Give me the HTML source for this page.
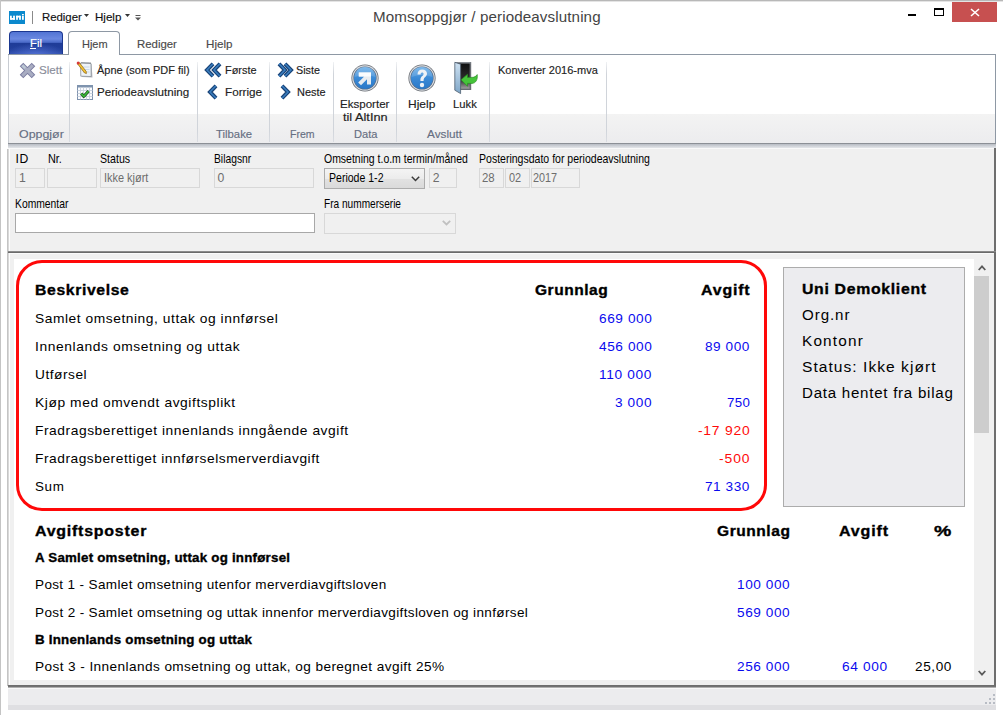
<!DOCTYPE html>
<html><head><meta charset="utf-8">
<style>
*{margin:0;padding:0;box-sizing:border-box}
html,body{width:1003px;height:715px;overflow:hidden;background:#fff;font-family:"Liberation Sans",sans-serif}
.a{position:absolute}
.t{position:absolute;white-space:pre;line-height:1}
svg{position:absolute;overflow:visible}
</style></head><body>
<div class="a" style="left:0px;top:0px;width:1003px;height:715px;background:#fff"></div>
<div class="a" style="left:0px;top:0px;width:1003px;height:1px;background:#b8b8b8"></div>
<div class="a" style="left:0px;top:1px;width:1003px;height:1px;background:#e4e4e4"></div>
<div class="a" style="left:0px;top:0px;width:1px;height:715px;background:#c4c4c4"></div>
<svg style="left:9px;top:11px" width="16" height="13" viewBox="0 0 16 13"><rect width="16" height="13" fill="#0b89cd"/><g fill="#fff"><rect x="1" y="4.7" width="1.8" height="4.1"/><rect x="4.1" y="4.7" width="1.8" height="4.1"/><rect x="1.6" y="7" width="4.3" height="1.8" rx="0.5"/><rect x="7.1" y="4.7" width="1.8" height="4.1"/><rect x="10.1" y="4.7" width="1.8" height="4.1"/><rect x="7.1" y="4.7" width="4.3" height="1.8" rx="0.5"/><rect x="13" y="4.7" width="1.8" height="4.1"/><rect x="13" y="3" width="1.8" height="1.1"/></g></svg>
<div class="a" style="left:32px;top:11px;width:1px;height:13px;background:#8a8a8a"></div>
<div class="t" style="left:41.50px;top:11.87px;font-size:11.5px;letter-spacing:0.000px;color:#111;-webkit-text-stroke:0.15px #111;transform:scaleX(0.9881);transform-origin:0 0;">Rediger</div>
<svg style="left:84px;top:14px" width="6" height="4"><path d="M0 0h5l-2.5 3z" fill="#333"/></svg>
<div class="t" style="left:95.40px;top:11.87px;font-size:11.5px;letter-spacing:0.000px;color:#111;-webkit-text-stroke:0.15px #111;transform:scaleX(1.0069);transform-origin:0 0;">Hjelp</div>
<svg style="left:125px;top:14px" width="6" height="4"><path d="M0 0h5l-2.5 3z" fill="#333"/></svg>
<svg style="left:135px;top:15px" width="7" height="6"><path d="M0.5 0.5h5" stroke="#555" stroke-width="1"/><path d="M0 2.5h6l-3 3z" fill="#555"/></svg>
<div class="t" style="left:373.00px;top:9.30px;font-size:15px;letter-spacing:0.115px;color:#444;transform:scaleX(1.0105);transform-origin:0 0;">Momsoppgjør / periodeavslutning</div>
<div class="a" style="left:908px;top:14px;width:8px;height:2px;background:#000"></div>
<div class="a" style="left:934px;top:8px;width:10px;height:8px;border:1px solid #000;border-top-width:2px"></div>
<div class="a" style="left:952px;top:2px;width:45px;height:20px;background:#c75050"></div>
<svg style="left:970px;top:8px" width="10" height="9"><path d="M1 1L9 8M9 1L1 8" stroke="#fff" stroke-width="1.6"/></svg>
<div class="a" style="left:9px;top:31px;width:54px;height:24px;background:radial-gradient(ellipse 60% 50% at 50% 100%,rgba(90,120,220,0.8),rgba(90,120,220,0) 100%),linear-gradient(#5274d4 0,#6a88e0 30%,#4a6ac8 45%,#1f3c98 50%,#22409c 80%,#3050b0 100%);border:1px solid #1b3790;border-bottom:none;border-radius:4px 4px 0 0"></div>
<div class="t" style="left:30.40px;top:38.17px;font-size:11.5px;letter-spacing:0.000px;color:#fff;-webkit-text-stroke:0.15px #fff;transform:scaleX(0.9884);transform-origin:0 0;">Fil</div>
<div class="a" style="left:30px;top:48px;width:6px;height:1px;background:#fff"></div>
<div class="a" style="left:8px;top:54px;width:988px;height:1px;background:#8e98a4"></div>
<div class="a" style="left:68px;top:31px;width:52px;height:25px;background:#fff;border:1px solid #8e98a4;border-bottom:none;border-radius:4px 4px 0 0"></div>
<div class="t" style="left:81.50px;top:38.97px;font-size:11.5px;letter-spacing:0.000px;color:#4a4a4a;-webkit-text-stroke:0.15px #4a4a4a;transform:scaleX(0.9537);transform-origin:0 0;">Hjem</div>
<div class="t" style="left:136.60px;top:38.97px;font-size:11.5px;letter-spacing:0.000px;color:#4a4a4a;-webkit-text-stroke:0.15px #4a4a4a;transform:scaleX(0.9905);transform-origin:0 0;">Rediger</div>
<div class="t" style="left:205.50px;top:38.97px;font-size:11.5px;letter-spacing:0.000px;color:#4a4a4a;-webkit-text-stroke:0.15px #4a4a4a;transform:scaleX(1.0107);transform-origin:0 0;">Hjelp</div>
<div class="a" style="left:8px;top:55px;width:988px;height:59px;background:#fff"></div>
<div class="a" style="left:8px;top:114px;width:988px;height:29.5px;background:linear-gradient(#f3f3f3,#ececee)"></div>
<div class="a" style="left:69px;top:100px;width:1px;height:1px;"></div>
<div class="a" style="left:69px;top:62px;width:1px;height:80px;background:linear-gradient(rgba(205,210,218,0.3),#d0d4da 15%,#d0d4da 85%,rgba(205,210,218,0.6))"></div>
<div class="a" style="left:197px;top:62px;width:1px;height:80px;background:linear-gradient(rgba(205,210,218,0.3),#d0d4da 15%,#d0d4da 85%,rgba(205,210,218,0.6))"></div>
<div class="a" style="left:269px;top:62px;width:1px;height:80px;background:linear-gradient(rgba(205,210,218,0.3),#d0d4da 15%,#d0d4da 85%,rgba(205,210,218,0.6))"></div>
<div class="a" style="left:333px;top:62px;width:1px;height:80px;background:linear-gradient(rgba(205,210,218,0.3),#d0d4da 15%,#d0d4da 85%,rgba(205,210,218,0.6))"></div>
<div class="a" style="left:396px;top:62px;width:1px;height:80px;background:linear-gradient(rgba(205,210,218,0.3),#d0d4da 15%,#d0d4da 85%,rgba(205,210,218,0.6))"></div>
<div class="a" style="left:489px;top:62px;width:1px;height:80px;background:linear-gradient(rgba(205,210,218,0.3),#d0d4da 15%,#d0d4da 85%,rgba(205,210,218,0.6))"></div>
<div class="a" style="left:606px;top:62px;width:1px;height:80px;background:linear-gradient(rgba(205,210,218,0.3),#d0d4da 15%,#d0d4da 85%,rgba(205,210,218,0.6))"></div>
<div class="a" style="left:8px;top:55px;width:1px;height:88px;background:#c8ccd2"></div>
<div class="a" style="left:995px;top:54px;width:1px;height:89px;background:#8e98a4"></div>
<div class="a" style="left:8px;top:143px;width:988px;height:1px;background:#8c9096"></div>
<div class="a" style="left:8px;top:144px;width:988px;height:4px;background:linear-gradient(#b8bcc4,#e4e6ea)"></div>
<div class="a" style="left:8px;top:148px;width:988px;height:1px;background:#fafafa"></div>
<svg style="left:18.5px;top:61.5px" width="17" height="17" viewBox="0 0 17 17"><path d="M2.5 2.5L14.5 14.5M14.5 2.5L2.5 14.5" stroke="#7c7ea2" stroke-width="5"/><path d="M3.2 3.2L13.8 13.8M13.8 3.2L3.2 13.8" stroke="#a9adc2" stroke-width="3.1"/><path d="M3.3 3.3L6.2 6.2" stroke="#bcc8d4" stroke-width="2.4"/></svg>
<div class="t" style="left:38.50px;top:65.07px;font-size:11.5px;letter-spacing:0.000px;color:#8a8e9a;-webkit-text-stroke:0.15px #8a8e9a;transform:scaleX(1.0124);transform-origin:0 0;">Slett</div>
<div class="t" style="left:19.00px;top:128.77px;font-size:11.5px;letter-spacing:0.000px;color:#666e82;-webkit-text-stroke:0.15px #666e82;transform:scaleX(1.0783);transform-origin:0 0;">Oppgjør</div>
<svg style="left:76px;top:61px" width="18" height="18" viewBox="0 0 18 18"><path d="M5.5 2.5L15.5 3L16.5 16.5L6 16z" fill="#b0b4bc"/><path d="M4.5 2L15 2.5L15.2 15.5L4.8 15.2z" fill="#eef3f8" stroke="#8a9098" stroke-width="0.8"/><path d="M6 2.2v-1.2M8 2.3v-1.2M10 2.4v-1.2M12 2.4v-1.2M14 2.5v-1.2" stroke="#505860" stroke-width="0.9"/><path d="M7 6h6.5M7 8.5h6.5M7 11h6.5" stroke="#b8cce0" stroke-width="0.7"/><path d="M1.5 2.8L3.2 1.4L10.2 10.4L10.4 12.6L8.4 11.8z" fill="#f2c230" stroke="#8a6010" stroke-width="0.7"/><circle cx="2.2" cy="2" r="1.5" fill="#d83838"/></svg>
<div class="t" style="left:96.60px;top:65.07px;font-size:11.5px;letter-spacing:0.000px;color:#222;-webkit-text-stroke:0.15px #222;transform:scaleX(0.9533);transform-origin:0 0;">Åpne (som PDF fil)</div>
<svg style="left:77px;top:85px" width="16" height="15" viewBox="0 0 16 15"><rect x="0.5" y="0.5" width="15" height="14" fill="#fbfcfe" stroke="#7f93ae"/><rect x="0.5" y="0.5" width="15" height="2" fill="#7f93ae"/><path d="M0.5 5.5h15M0.5 8.5h15M0.5 11.5h15M3.5 2.5v12M6.5 2.5v12M9.5 2.5v12M12.5 2.5v12" stroke="#c6d0de" stroke-width="0.9"/><path d="M4.3 8.6L6.8 11.4L11.6 6" stroke="#1e4a1e" stroke-width="3" fill="none" stroke-linejoin="round"/><path d="M4.3 8.6L6.8 11.4L11.6 6" stroke="#38b838" stroke-width="1.7" fill="none" stroke-linejoin="round"/></svg>
<div class="t" style="left:96.60px;top:86.77px;font-size:11.5px;letter-spacing:0.000px;color:#222;-webkit-text-stroke:0.15px #222;transform:scaleX(1.0085);transform-origin:0 0;">Periodeavslutning</div>
<svg style="left:204px;top:62px" width="18" height="16" viewBox="0 0 18 16"><polyline points="16,1.8 10,8 16,14.2" stroke="#1a4478" stroke-width="4" fill="none" stroke-linejoin="miter"/><polyline points="9,1.8 3,8 9,14.2" stroke="#1a4478" stroke-width="4" fill="none" stroke-linejoin="miter"/><polyline points="16,1.8 10,8 16,14.2" stroke="#3a7fc0" stroke-width="1.5" fill="none" stroke-linejoin="miter"/><polyline points="9,1.8 3,8 9,14.2" stroke="#3a7fc0" stroke-width="1.5" fill="none" stroke-linejoin="miter"/></svg>
<div class="t" style="left:224.60px;top:65.07px;font-size:11.5px;letter-spacing:0.000px;color:#222;-webkit-text-stroke:0.15px #222;transform:scaleX(0.9508);transform-origin:0 0;">Første</div>
<svg style="left:207px;top:84px" width="12" height="16" viewBox="0 0 12 16"><polyline points="9,1.8 3,8 9,14.2" stroke="#1a4478" stroke-width="4" fill="none" stroke-linejoin="miter"/><polyline points="9,1.8 3,8 9,14.2" stroke="#3a7fc0" stroke-width="1.5" fill="none" stroke-linejoin="miter"/></svg>
<div class="t" style="left:224.60px;top:86.77px;font-size:11.5px;letter-spacing:0.000px;color:#222;-webkit-text-stroke:0.15px #222;transform:scaleX(1.0154);transform-origin:0 0;">Forrige</div>
<div class="t" style="left:216.40px;top:128.77px;font-size:11.5px;letter-spacing:0.000px;color:#666e82;-webkit-text-stroke:0.15px #666e82;transform:scaleX(0.9848);transform-origin:0 0;">Tilbake</div>
<svg style="left:276px;top:62px" width="18" height="16" viewBox="0 0 18 16"><polyline points="3,1.8 9,8 3,14.2" stroke="#1a4478" stroke-width="4" fill="none" stroke-linejoin="miter"/><polyline points="9,1.8 15,8 9,14.2" stroke="#1a4478" stroke-width="4" fill="none" stroke-linejoin="miter"/><polyline points="3,1.8 9,8 3,14.2" stroke="#3a7fc0" stroke-width="1.5" fill="none" stroke-linejoin="miter"/><polyline points="9,1.8 15,8 9,14.2" stroke="#3a7fc0" stroke-width="1.5" fill="none" stroke-linejoin="miter"/></svg>
<div class="t" style="left:296.20px;top:65.07px;font-size:11.5px;letter-spacing:0.000px;color:#222;-webkit-text-stroke:0.15px #222;transform:scaleX(0.9344);transform-origin:0 0;">Siste</div>
<svg style="left:279px;top:84px" width="12" height="16" viewBox="0 0 12 16"><polyline points="3,1.8 9,8 3,14.2" stroke="#1a4478" stroke-width="4" fill="none" stroke-linejoin="miter"/><polyline points="3,1.8 9,8 3,14.2" stroke="#3a7fc0" stroke-width="1.5" fill="none" stroke-linejoin="miter"/></svg>
<div class="t" style="left:296.60px;top:86.77px;font-size:11.5px;letter-spacing:0.000px;color:#222;-webkit-text-stroke:0.15px #222;transform:scaleX(0.9518);transform-origin:0 0;">Neste</div>
<div class="t" style="left:289.70px;top:128.77px;font-size:11.5px;letter-spacing:0.000px;color:#666e82;-webkit-text-stroke:0.15px #666e82;transform:scaleX(0.9164);transform-origin:0 0;">Frem</div>
<svg style="left:351px;top:64px" width="28" height="28" viewBox="0 0 28 28"><defs><linearGradient id="g1" x1="0" y1="0" x2="0" y2="1"><stop offset="0" stop-color="#68aee8"/><stop offset="0.5" stop-color="#3b8ad6"/><stop offset="1" stop-color="#2a78c8"/></linearGradient></defs><circle cx="14" cy="14" r="13.6" fill="#6a6e74"/><circle cx="14" cy="14" r="12.8" fill="#d8dce2"/><circle cx="14" cy="14" r="11.6" fill="#5a6a80"/><circle cx="14" cy="14" r="11" fill="url(#g1)"/><path d="M3.5 13 A10.5 10.5 0 0 1 24.5 13 Q14 9 3.5 13z" fill="#ffffff" opacity="0.15"/><path d="M7.8 8.5H20V20.5H16V15.3L10 21.3L7.2 18.5L13.2 12.5H7.8z" fill="#e8ecf0"/><path d="M7.8 8.5H20V12.5H7.8z" fill="#fafcfe"/></svg>
<div class="t" style="left:340.40px;top:98.87px;font-size:11.5px;letter-spacing:0.000px;color:#222;-webkit-text-stroke:0.15px #222;transform:scaleX(1.0037);transform-origin:0 0;">Eksporter</div>
<div class="t" style="left:342.80px;top:111.67px;font-size:11.5px;letter-spacing:0.000px;color:#222;-webkit-text-stroke:0.15px #222;transform:scaleX(1.1072);transform-origin:0 0;">til AltInn</div>
<div class="t" style="left:353.60px;top:128.77px;font-size:11.5px;letter-spacing:0.000px;color:#666e82;-webkit-text-stroke:0.15px #666e82;transform:scaleX(0.9672);transform-origin:0 0;">Data</div>
<svg style="left:408px;top:63.5px" width="28" height="28" viewBox="0 0 28 28"><defs><linearGradient id="g2" x1="0" y1="0" x2="0" y2="1"><stop offset="0" stop-color="#68aee8"/><stop offset="0.5" stop-color="#3b8ad6"/><stop offset="1" stop-color="#2a78c8"/></linearGradient></defs><circle cx="14" cy="14" r="13.6" fill="#6a6e74"/><circle cx="14" cy="14" r="12.8" fill="#d8dce2"/><circle cx="14" cy="14" r="11.6" fill="#5a6a80"/><circle cx="14" cy="14" r="11" fill="url(#g2)"/><path d="M3.5 13 A10.5 10.5 0 0 1 24.5 13 Q14 9 3.5 13z" fill="#ffffff" opacity="0.15"/><path d="M9.5 10.5C9.5 7.3 11.5 5.6 14.2 5.6C17.3 5.6 19 7.5 19 9.8C19 12.8 15.6 13.2 15.6 16.2V17H12.4V15.8C12.4 12.2 15.6 11.8 15.6 10C15.6 9 15 8.5 14.1 8.5C13.1 8.5 12.6 9.2 12.6 10.5z" fill="#eef2f6"/><circle cx="14" cy="21" r="2.2" fill="#eef2f6"/></svg>
<div class="t" style="left:408.00px;top:98.87px;font-size:11.5px;letter-spacing:0.000px;color:#222;-webkit-text-stroke:0.15px #222;transform:scaleX(1.0412);transform-origin:0 0;">Hjelp</div>
<svg style="left:448px;top:58px" width="34" height="38" viewBox="0 0 34 38"><defs><linearGradient id="dg1" x1="0" y1="0" x2="0" y2="1"><stop offset="0" stop-color="#101010"/><stop offset="0.65" stop-color="#2e2e2e"/><stop offset="1" stop-color="#a0a0a0"/></linearGradient><linearGradient id="dg2" x1="0" y1="0" x2="0" y2="1"><stop offset="0" stop-color="#cfe2f2"/><stop offset="1" stop-color="#7ea6c8"/></linearGradient></defs><rect x="7" y="4" width="16.2" height="28" fill="#686c72"/><rect x="7.6" y="4.4" width="15" height="1" fill="#9aa0a6"/><rect x="8.6" y="5.6" width="13" height="25" fill="url(#dg1)"/><path d="M6.8 4.3L12.6 6.2V35.6L6.8 32.2z" fill="url(#dg2)" stroke="#4c5c6c" stroke-width="0.8"/><path d="M13 21.8L19.5 16.3V19.4H24C26.4 19.4 28 18.4 29.2 16.6C29.8 21.4 28 25.2 24 25.4H19.5V28.3z" fill="#46c43a" stroke="#2a8c22" stroke-width="0.7"/></svg>
<div class="t" style="left:452.50px;top:98.87px;font-size:11.5px;letter-spacing:0.000px;color:#222;-webkit-text-stroke:0.15px #222;transform:scaleX(0.9795);transform-origin:0 0;">Lukk</div>
<div class="t" style="left:426.50px;top:128.77px;font-size:11.5px;letter-spacing:0.000px;color:#666e82;-webkit-text-stroke:0.15px #666e82;transform:scaleX(1.0230);transform-origin:0 0;">Avslutt</div>
<div class="t" style="left:498.40px;top:64.97px;font-size:11.5px;letter-spacing:0.000px;color:#222;-webkit-text-stroke:0.15px #222;transform:scaleX(0.9577);transform-origin:0 0;">Konverter 2016-mva</div>
<div class="a" style="left:7px;top:149px;width:989px;height:103px;background:#f0f0f0"></div>
<div class="a" style="left:7px;top:149px;width:1px;height:537px;background:#c4c4c4"></div>
<div class="a" style="left:8px;top:149px;width:1px;height:537px;background:#d8d8d8"></div>
<div class="a" style="left:9px;top:149px;width:1px;height:537px;background:#fdfdfd"></div>
<div class="a" style="left:994px;top:148px;width:2px;height:104px;background:#6e6e6e"></div>
<div class="t" style="left:15.60px;top:152.57px;font-size:12.2px;letter-spacing:0.000px;color:#000;letter-spacing:0.4px">ID</div>
<div class="t" style="left:47.70px;top:152.57px;font-size:12.2px;letter-spacing:0.000px;color:#000;transform:scaleX(0.8923);transform-origin:0 0;">Nr.</div>
<div class="t" style="left:100.30px;top:152.57px;font-size:12.2px;letter-spacing:0.000px;color:#000;transform:scaleX(0.8709);transform-origin:0 0;">Status</div>
<div class="t" style="left:214.40px;top:152.57px;font-size:12.2px;letter-spacing:0.000px;color:#000;transform:scaleX(0.8449);transform-origin:0 0;">Bilagsnr</div>
<div class="t" style="left:324.00px;top:152.57px;font-size:12.2px;letter-spacing:0.000px;color:#000;transform:scaleX(0.8595);transform-origin:0 0;">Omsetning t.o.m termin/måned</div>
<div class="t" style="left:479.40px;top:152.57px;font-size:12.2px;letter-spacing:0.000px;color:#000;transform:scaleX(0.8638);transform-origin:0 0;">Posteringsdato for periodeavslutning</div>
<div class="a" style="left:15px;top:168px;width:30px;height:20px;background:#f0f0f0;border:1px solid #d8d8d8"></div>
<div class="a" style="left:47px;top:168px;width:50px;height:20px;background:#f0f0f0;border:1px solid #d8d8d8"></div>
<div class="a" style="left:100px;top:168px;width:100px;height:20px;background:#f0f0f0;border:1px solid #d8d8d8"></div>
<div class="a" style="left:214px;top:168px;width:100px;height:20px;background:#f0f0f0;border:1px solid #d8d8d8"></div>
<div class="a" style="left:429px;top:168px;width:28px;height:20px;background:#f0f0f0;border:1px solid #d8d8d8"></div>
<div class="a" style="left:479px;top:168px;width:25px;height:20px;background:#f0f0f0;border:1px solid #d8d8d8"></div>
<div class="a" style="left:505px;top:168px;width:25px;height:20px;background:#f0f0f0;border:1px solid #d8d8d8"></div>
<div class="a" style="left:531px;top:168px;width:49px;height:20px;background:#f0f0f0;border:1px solid #d8d8d8"></div>
<div class="t" style="left:19.00px;top:171.67px;font-size:12.2px;letter-spacing:0.000px;color:#6d6d6d;">1</div>
<div class="t" style="left:103.70px;top:171.67px;font-size:12.2px;letter-spacing:0.000px;color:#6d6d6d;transform:scaleX(0.8981);transform-origin:0 0;">Ikke kjørt</div>
<div class="t" style="left:217.60px;top:171.67px;font-size:12.2px;letter-spacing:0.000px;color:#6d6d6d;">0</div>
<div class="t" style="left:432.70px;top:171.67px;font-size:12.2px;letter-spacing:0.000px;color:#6d6d6d;">2</div>
<div class="t" style="left:482.40px;top:171.67px;font-size:12.2px;letter-spacing:0.000px;color:#6d6d6d;transform:scaleX(0.9364);transform-origin:0 0;">28</div>
<div class="t" style="left:508.50px;top:171.67px;font-size:12.2px;letter-spacing:0.000px;color:#6d6d6d;transform:scaleX(0.8995);transform-origin:0 0;">02</div>
<div class="t" style="left:533.40px;top:171.67px;font-size:12.2px;letter-spacing:0.000px;color:#6d6d6d;transform:scaleX(0.8885);transform-origin:0 0;">2017</div>
<div class="a" style="left:324px;top:168px;width:101px;height:21px;background:linear-gradient(#f4f4f4,#ececec 50%,#e2e2e2 51%,#dadada);border:1px solid #acacac"></div>
<div class="t" style="left:328.60px;top:172.47px;font-size:12.2px;letter-spacing:0.000px;color:#000;transform:scaleX(0.8649);transform-origin:0 0;">Periode 1-2</div>
<svg style="left:411px;top:176px" width="9" height="6" viewBox="0 0 9 6"><path d="M0.8 0.8L4.5 4.5L8.2 0.8" stroke="#3a3a3a" stroke-width="1.5" fill="none"/></svg>
<div class="t" style="left:15.40px;top:197.67px;font-size:12.2px;letter-spacing:0.000px;color:#000;transform:scaleX(0.8476);transform-origin:0 0;">Kommentar</div>
<div class="t" style="left:324.10px;top:197.67px;font-size:12.2px;letter-spacing:0.000px;color:#000;transform:scaleX(0.8299);transform-origin:0 0;">Fra nummerserie</div>
<div class="a" style="left:15px;top:213px;width:300px;height:20px;background:#fff;border:1px solid #a8a8a8"></div>
<div class="a" style="left:324px;top:213px;width:132px;height:21px;background:#f0f0f0;border:1px solid #d8d8d8"></div>
<svg style="left:442px;top:220px" width="9" height="6" viewBox="0 0 9 6"><path d="M0.8 0.8L4.5 4.5L8.2 0.8" stroke="#c0c0c0" stroke-width="1.8" fill="none"/></svg>
<div class="a" style="left:10px;top:254px;width:984px;height:431px;background:#f0f0f0"></div>
<div class="a" style="left:8px;top:251px;width:988px;height:1px;background:#8a8a8a"></div>
<div class="a" style="left:8px;top:252px;width:988px;height:1px;background:#6a6a6a"></div>
<div class="a" style="left:10px;top:253px;width:984px;height:1px;background:#fafafa"></div>
<div class="a" style="left:994px;top:252px;width:2px;height:435px;background:#6e6e6e"></div>
<div class="a" style="left:14px;top:259px;width:960px;height:421px;background:#fff"></div>
<svg style="left:977.5px;top:265px" width="8" height="6" viewBox="0 0 8 6"><path d="M0.7 5L4 1.4L7.3 5" stroke="#5a5a5a" stroke-width="1.8" fill="none"/></svg>
<div class="a" style="left:974px;top:276px;width:15px;height:157px;background:#cdcdcd"></div>
<svg style="left:977.5px;top:670px" width="8" height="6" viewBox="0 0 8 6"><path d="M0.7 1L4 4.6L7.3 1" stroke="#5a5a5a" stroke-width="1.8" fill="none"/></svg>
<div class="a" style="left:8px;top:685px;width:988px;height:1px;background:#6e6e6e"></div>
<div class="a" style="left:8px;top:686px;width:988px;height:1px;background:#727272"></div>
<div class="a" style="left:8px;top:687px;width:988px;height:1px;background:#b0b0b0"></div>
<div class="a" style="left:8px;top:688px;width:988px;height:1px;background:#f8f8f8"></div>
<div class="a" style="left:8px;top:689px;width:988px;height:16px;background:#ececee"></div>
<div class="a" style="left:8px;top:705px;width:988px;height:5px;background:#dfdfe2"></div>
<svg style="left:984px;top:693px" width="12" height="12" viewBox="0 0 12 12"><g fill="#b8bcc4"><rect x="9" y="1" width="2" height="2"/><rect x="5" y="5" width="2" height="2"/><rect x="9" y="5" width="2" height="2"/><rect x="1" y="9" width="2" height="2"/><rect x="5" y="9" width="2" height="2"/><rect x="9" y="9" width="2" height="2"/></g></svg>
<div class="a" style="left:15.6px;top:260px;width:751.2px;height:250.5px;border:3.5px solid #ff0808;border-radius:26px"></div>
<div class="t" style="left:35.40px;top:282.30px;font-size:15px;letter-spacing:0.594px;color:#000;font-weight:bold;-webkit-text-stroke:0.35px #000;transform:scaleX(1.0498);transform-origin:0 0;">Beskrivelse</div>
<div class="t" style="left:534.50px;top:282.30px;font-size:15px;letter-spacing:0.507px;color:#000;font-weight:bold;-webkit-text-stroke:0.35px #000;transform:scaleX(1.0368);transform-origin:0 0;">Grunnlag</div>
<div class="t" style="left:700.70px;top:282.30px;font-size:15px;letter-spacing:0.750px;color:#000;font-weight:bold;-webkit-text-stroke:0.35px #000;transform:scaleX(1.0634);transform-origin:0 0;">Avgift</div>
<div class="t" style="left:35.40px;top:312.00px;font-size:13px;letter-spacing:0.514px;color:#000;transform:scaleX(1.0603);transform-origin:0 0;">Samlet omsetning, uttak og innførsel</div>
<div class="t" style="left:598.50px;top:312.00px;font-size:13px;letter-spacing:0.562px;color:#0a0aee;transform:scaleX(1.0502);transform-origin:0 0;">669 000</div>
<div class="t" style="left:35.40px;top:340.00px;font-size:13px;letter-spacing:0.555px;color:#000;transform:scaleX(1.0622);transform-origin:0 0;">Innenlands omsetning og uttak</div>
<div class="t" style="left:598.50px;top:340.00px;font-size:13px;letter-spacing:0.562px;color:#0a0aee;transform:scaleX(1.0502);transform-origin:0 0;">456 000</div>
<div class="t" style="left:705.00px;top:340.00px;font-size:13px;letter-spacing:0.531px;color:#0a0aee;transform:scaleX(1.0466);transform-origin:0 0;">89 000</div>
<div class="t" style="left:35.40px;top:368.00px;font-size:13px;letter-spacing:0.496px;color:#000;transform:scaleX(1.0536);transform-origin:0 0;">Utførsel</div>
<div class="t" style="left:599.10px;top:368.00px;font-size:13px;letter-spacing:0.594px;color:#0a0aee;transform:scaleX(1.0545);transform-origin:0 0;">110 000</div>
<div class="t" style="left:35.40px;top:395.50px;font-size:13px;letter-spacing:0.539px;color:#000;transform:scaleX(1.0616);transform-origin:0 0;">Kjøp med omvendt avgiftsplikt</div>
<div class="t" style="left:614.90px;top:395.50px;font-size:13px;letter-spacing:0.565px;color:#0a0aee;transform:scaleX(1.0486);transform-origin:0 0;">3 000</div>
<div class="t" style="left:726.50px;top:395.50px;font-size:13px;letter-spacing:0.351px;color:#0a0aee;transform:scaleX(1.0221);transform-origin:0 0;">750</div>
<div class="t" style="left:35.40px;top:423.50px;font-size:13px;letter-spacing:0.520px;color:#000;transform:scaleX(1.0609);transform-origin:0 0;">Fradragsberettiget innenlands inngående avgift</div>
<div class="t" style="left:697.80px;top:423.50px;font-size:13px;letter-spacing:0.703px;color:#ff0a0a;transform:scaleX(1.0681);transform-origin:0 0;">-17 920</div>
<div class="t" style="left:35.40px;top:451.50px;font-size:13px;letter-spacing:0.493px;color:#000;transform:scaleX(1.0590);transform-origin:0 0;">Fradragsberettiget innførselsmerverdiavgift</div>
<div class="t" style="left:718.80px;top:451.50px;font-size:13px;letter-spacing:0.854px;color:#ff0a0a;transform:scaleX(1.0702);transform-origin:0 0;">-500</div>
<div class="t" style="left:35.40px;top:479.50px;font-size:13px;letter-spacing:0.601px;color:#000;transform:scaleX(1.0309);transform-origin:0 0;">Sum</div>
<div class="t" style="left:705.00px;top:479.50px;font-size:13px;letter-spacing:0.531px;color:#0a0aee;transform:scaleX(1.0466);transform-origin:0 0;">71 330</div>
<div class="a" style="left:783px;top:267px;width:182px;height:240px;background:#ececef;border:1px solid #acacac"></div>
<div class="t" style="left:802.30px;top:281.00px;font-size:15px;letter-spacing:0.648px;color:#000;font-weight:bold;-webkit-text-stroke:0.35px #000;transform:scaleX(1.0543);transform-origin:0 0;">Uni Demoklient</div>
<div class="t" style="left:802.30px;top:307.65px;font-size:14px;letter-spacing:0.869px;color:#000;transform:scaleX(1.0787);transform-origin:0 0;">Org.nr</div>
<div class="t" style="left:802.30px;top:333.75px;font-size:14px;letter-spacing:1.073px;color:#000;transform:scaleX(1.0959);transform-origin:0 0;">Kontonr</div>
<div class="t" style="left:802.30px;top:359.85px;font-size:14px;letter-spacing:0.928px;color:#000;transform:scaleX(1.1122);transform-origin:0 0;">Status: Ikke kjørt</div>
<div class="t" style="left:802.30px;top:385.95px;font-size:14px;letter-spacing:0.687px;color:#000;transform:scaleX(1.0784);transform-origin:0 0;">Data hentet fra bilag</div>
<div class="t" style="left:35.00px;top:522.60px;font-size:15px;letter-spacing:0.718px;color:#000;font-weight:bold;-webkit-text-stroke:0.35px #000;transform:scaleX(1.0636);transform-origin:0 0;">Avgiftsposter</div>
<div class="t" style="left:716.70px;top:522.60px;font-size:15px;letter-spacing:0.515px;color:#000;font-weight:bold;-webkit-text-stroke:0.35px #000;transform:scaleX(1.0374);transform-origin:0 0;">Grunnlag</div>
<div class="t" style="left:838.60px;top:522.60px;font-size:15px;letter-spacing:0.792px;color:#000;font-weight:bold;-webkit-text-stroke:0.35px #000;transform:scaleX(1.0672);transform-origin:0 0;">Avgift</div>
<div class="t" style="left:933.60px;top:522.60px;font-size:15px;letter-spacing:0.000px;color:#000;font-weight:bold;-webkit-text-stroke:0.35px #000;transform:scaleX(1.2965);transform-origin:0 0;">%</div>
<div class="t" style="left:35.00px;top:551.30px;font-size:13px;letter-spacing:0.225px;color:#000;font-weight:bold;-webkit-text-stroke:0.35px #000;transform:scaleX(1.0236);transform-origin:0 0;">A Samlet omsetning, uttak og innførsel</div>
<div class="t" style="left:35.00px;top:578.30px;font-size:13px;letter-spacing:0.346px;color:#000;transform:scaleX(1.0399);transform-origin:0 0;">Post 1 - Samlet omsetning utenfor merverdiavgiftsloven</div>
<div class="t" style="left:736.90px;top:578.30px;font-size:13px;letter-spacing:0.544px;color:#0a0aee;transform:scaleX(1.0485);transform-origin:0 0;">100 000</div>
<div class="t" style="left:35.00px;top:605.80px;font-size:13px;letter-spacing:0.345px;color:#000;transform:scaleX(1.0407);transform-origin:0 0;">Post 2 - Samlet omsetning og uttak innenfor merverdiavgiftsloven og innførsel</div>
<div class="t" style="left:736.90px;top:605.80px;font-size:13px;letter-spacing:0.544px;color:#0a0aee;transform:scaleX(1.0485);transform-origin:0 0;">569 000</div>
<div class="t" style="left:35.00px;top:632.70px;font-size:13px;letter-spacing:0.232px;color:#000;font-weight:bold;-webkit-text-stroke:0.35px #000;transform:scaleX(1.0232);transform-origin:0 0;">B Innenlands omsetning og uttak</div>
<div class="t" style="left:35.00px;top:660.00px;font-size:13px;letter-spacing:0.400px;color:#000;transform:scaleX(1.0465);transform-origin:0 0;">Post 3 - Innenlands omsetning og uttak, og beregnet avgift 25%</div>
<div class="t" style="left:736.90px;top:660.00px;font-size:13px;letter-spacing:0.544px;color:#0a0aee;transform:scaleX(1.0485);transform-origin:0 0;">256 000</div>
<div class="t" style="left:842.40px;top:660.00px;font-size:13px;letter-spacing:0.618px;color:#0a0aee;transform:scaleX(1.0547);transform-origin:0 0;">64 000</div>
<div class="t" style="left:914.50px;top:660.00px;font-size:13px;letter-spacing:0.552px;color:#000;transform:scaleX(1.0474);transform-origin:0 0;">25,00</div>
</body></html>
